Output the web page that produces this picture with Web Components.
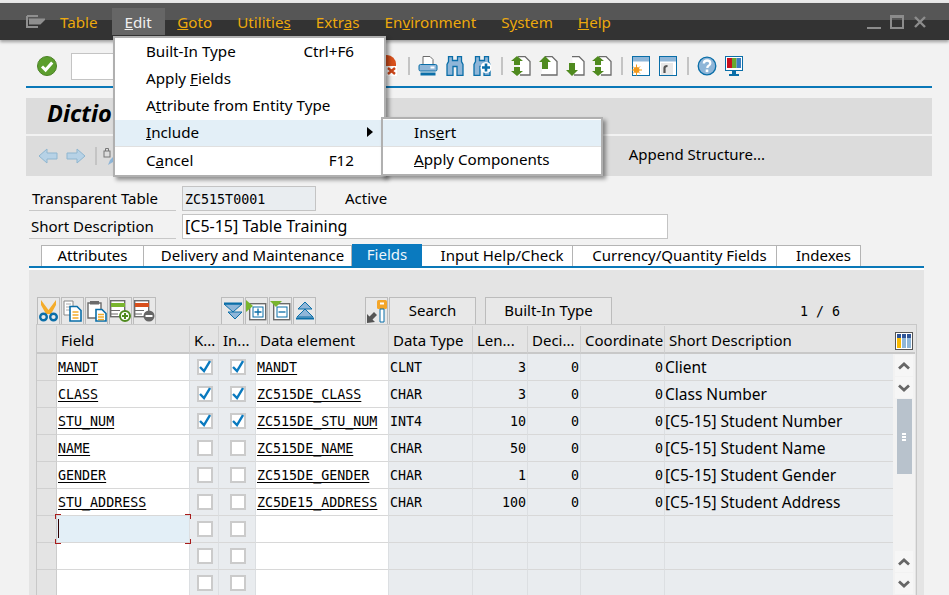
<!DOCTYPE html>
<html lang="en"><head><meta charset="utf-8"><title>Dictionary</title>
<style>
html,body{margin:0;height:595px;overflow:hidden;background:#f2f2f2}
body{font:15px "Noto Sans","Open Sans",sans-serif;color:#000}
</style></head><body>
<sap-app></sap-app>
<script>
const BL='#0a6ea8',LB='#8fb6d8',GR='#4f8a1f',LG='#79b52e',GY='#6b6b6b';
const I={
check:`<svg width="20" height="20" viewBox="0 0 20 20"><circle cx="10" cy="10" r="9.5" fill="#5c9e2e" stroke="#4c8226"/><path d="M5 10.5l3.6 3.6L15.2 6.5" fill="none" stroke="#fff" stroke-width="3"/></svg>`,
redx:`<svg width="20" height="22" viewBox="0 0 20 22"><path d="M0 0h8a9 9 0 0 1 9 9v11H0z" fill="#d8501c"/><path d="M7 11h11v10H7z" fill="#fff"/><path d="M9 13l7 6M16 13l-7 6" stroke="#c9451a" stroke-width="2.4"/></svg>`,
print:`<svg width="20" height="20" viewBox="0 0 19 20"><path d="M4.500 .5h7l3 3v5h-10z" fill="#fff" stroke="${GY}"/><rect x=".5" y="8.500" width="18" height="6.500" rx="1.500" fill="${LB}" stroke="${BL}"/><rect x="12" y="10.500" width="4" height="2" fill="#fff"/><rect x="2" y="16.500" width="15" height="3" fill="${BL}"/></svg>`,
bin:`<svg width="18" height="20" viewBox="0 0 17 20"><path d="M2 .5h4v4h5v-4h4v5l1.500 3v11h-6v-9h-4v9h-6v-11l1.500-3z" fill="${LB}" stroke="${BL}" stroke-width="1.300"/></svg>`,
binp:`<svg width="19" height="20" viewBox="0 0 18 20"><path d="M2 .5h4v4h5v-4h4v5l1.500 3v11h-6v-9h-4v9h-6v-11l1.500-3z" fill="${LB}" stroke="${BL}" stroke-width="1.300"/><circle cx="12.500" cy="11.500" r="5.500" fill="#fff"/><path d="M12.500 7.500v8M8.500 11.500h8" stroke="${BL}" stroke-width="2.600"/></svg>`,
pg:(a,b)=>`<svg width="20" height="20" viewBox="0 0 20 20"><path d="M7 .5h7l5 5v13.500H${b?9:3}" fill="#fff" stroke="${GY}" stroke-width="1.300"/>${a&&!b?'<path d="M7 0L1 6h3v7h6V6h3z" fill="'+GR+'"/>':''}${b&&!a?'<path d="M4 7h6v7h3l-6 6-6-6h3z" fill="'+GR+'"/>':''}${a&&b?'<path d="M6 0L0 5h3v4h6V5h3zM3 11h6v4h3l-6 5-6-5h3z" fill="'+GR+'"/>':''}</svg>`,
win1:`<svg width="20" height="20" viewBox="0 0 18 20"><rect x=".5" y=".5" width="17" height="19" fill="#fff" stroke="${BL}"/><rect x="1" y="1" width="16" height="4.500" fill="${LB}"/><circle cx="4.500" cy="14" r="3" fill="#f39a1d"/><path d="M4.500 8.500v11M0 14h10M1 10.500l7 7M8 10.500l-7 7" stroke="#f39a1d"/></svg>`,
win2:`<svg width="20" height="20" viewBox="0 0 18 20"><rect x=".5" y=".5" width="17" height="19" fill="#fff" stroke="${BL}"/><rect x="1" y="1" width="16" height="4.500" fill="${LB}"/><rect x="2" y="7" width="12" height="12" fill="#e8e8e8"/><path d="M5.500 17v-5q0-2 3-2" fill="none" stroke="#555" stroke-width="2.200"/></svg>`,
help:`<svg width="20" height="20" viewBox="0 0 19 20"><circle cx="9.500" cy="10" r="8.800" fill="${LB}" stroke="${BL}" stroke-width="1.300"/><path d="M6.300 7.500q.2-3 3.300-3 3.200 0 3.200 2.700 0 1.800-2 2.800-1 .6-1 2" fill="none" stroke="#fff" stroke-width="2.300"/><rect x="8.200" y="13.500" width="2.600" height="2.600" fill="#fff"/></svg>`,
mon:`<svg width="20" height="20" viewBox="0 0 18 20"><rect x=".5" y=".5" width="17" height="14" fill="#fff" stroke="${BL}"/><rect x="2" y="2" width="5" height="10" fill="#c8101e"/><rect x="7" y="2" width="4.500" height="10" fill="#6aa82e"/><rect x="11.500" y="2" width="4.500" height="10" fill="#3c7ec0"/><path d="M7 15h4v3H7zM4 18h10v2H4z" fill="${BL}"/></svg>`,
back:`<svg width="20" height="16" viewBox="0 0 20 16"><path d="M1 8l8-7v4h10v6H9v4z" fill="#b7d2e6" stroke="#8fb6d0"/></svg>`,
fwd:`<svg width="20" height="16" viewBox="0 0 20 16"><path d="M19 8l-8-7v4H1v6h10v4z" fill="#b7d2e6" stroke="#8fb6d0"/></svg>`,
lock:`<svg width="10" height="20" viewBox="0 0 10 20"><rect x="1" y="5" width="6" height="6" fill="none" stroke="#777"/><path d="M2.500 5V2.500h3V5" fill="none" stroke="#777"/><path d="M7 14l3-3v5l-5 3z" fill="${LB}"/></svg>`,
cut:`<svg width="19" height="22" viewBox="0 0 19 22"><path d="M2 0l7.500 10L17 0v5l-5 9H7L2 5z" fill="#f4ac2a"/><circle cx="4.500" cy="17" r="3.300" fill="none" stroke="${BL}" stroke-width="2.400"/><circle cx="14.500" cy="17" r="3.300" fill="none" stroke="${BL}" stroke-width="2.400"/></svg>`,
copy:`<svg width="19" height="22" viewBox="0 0 19 22"><path d="M1 1h9v14H1z" fill="#fff" stroke="#888"/><path d="M3 4h5M3 7h4M3 10h4" stroke="#aaa"/><path d="M7 6.500h7l4 4V21H7z" fill="#fff" stroke="${BL}" stroke-width="1.600"/><path d="M9.500 12h6M9.500 15h6M9.500 18h6" stroke="#f4ac2a" stroke-width="1.600"/></svg>`,
paste:`<svg width="20" height="22" viewBox="0 0 20 22"><path d="M1 3h13v15H1z" fill="#fff" stroke="${GY}" stroke-width="1.400"/><rect x="3" y="1" width="9" height="3.500" fill="${GY}"/><path d="M9 9.500h6l4 4V21H9z" fill="#fff" stroke="${BL}" stroke-width="1.600"/><path d="M11 14.500h6M11 17h6M11 19.500h6" stroke="#f4ac2a" stroke-width="1.500"/></svg>`,
rowadd:`<svg width="21" height="22" viewBox="0 0 21 22"><rect x=".7" y=".7" width="14" height="16" fill="#fff" stroke="${GY}" stroke-width="1.400"/><rect x="1" y="3" width="14" height="4" fill="${LG}"/><path d="M1 10.500h9M1 14h7" stroke="${GY}"/><circle cx="15" cy="16" r="5" fill="#fff" stroke="${GR}" stroke-width="2"/><path d="M15 13v6M12 16h6" stroke="${GR}" stroke-width="2"/></svg>`,
rowdel:`<svg width="21" height="22" viewBox="0 0 21 22"><rect x=".7" y=".7" width="14" height="16" fill="#fff" stroke="${GY}" stroke-width="1.400"/><rect x="1" y="3" width="14" height="4" fill="#d8501c"/><path d="M1 10.500h9M1 14h7" stroke="${GY}"/><circle cx="15" cy="16" r="5.500" fill="#666"/><path d="M11.500 16h7" stroke="#fff" stroke-width="2"/></svg>`,
first:`<svg width="20" height="20" viewBox="0 0 20 20"><path d="M1 3h18L10 11z" fill="${LB}" stroke="${BL}"/><path d="M1 2.500h18" stroke="${BL}" stroke-width="2"/><path d="M5 11h14l-7 7z" fill="${LB}" stroke="${BL}"/></svg>`,
exp:`<svg width="21" height="22" viewBox="0 0 21 22"><rect x="3.700" y="3.700" width="16" height="16" fill="#fff" stroke="${GY}" stroke-width="1.400"/><path d="M0 0l7 6-7 6z" fill="${LG}"/><rect x="7" y="7" width="10" height="10" fill="none" stroke="${BL}"/><path d="M12 8.500v7M8.500 12h7" stroke="${BL}" stroke-width="1.300"/></svg>`,
col:`<svg width="21" height="22" viewBox="0 0 21 22"><rect x="3.700" y="3.700" width="16" height="16" fill="#fff" stroke="${GY}" stroke-width="1.400"/><path d="M0 1h12L6 7z" fill="${LG}"/><rect x="7" y="7" width="10" height="10" fill="none" stroke="${BL}"/><path d="M8.500 12h7" stroke="${BL}" stroke-width="1.300"/></svg>`,
last:`<svg width="20" height="20" viewBox="0 0 20 20"><path d="M10 1l7 7H3z" fill="${LB}" stroke="${BL}"/><path d="M10 8l8 8H2z" fill="${LB}" stroke="${BL}"/><path d="M1 17.500h18" stroke="${BL}" stroke-width="2"/></svg>`,
key:`<svg width="20" height="24" viewBox="0 0 20 24"><rect x="10" y="1" width="10" height="9" rx="1.500" fill="#f4a62a"/><rect x="13" y="3.500" width="4" height="2" fill="#fff"/><path d="M13 10h4v13h-4z" fill="#fff" stroke="${BL}"/><path d="M0 24v-9l2.500 2.500L7 13l3 3-4.500 4.500L8 23z" fill="#555"/></svg>`,
cols:`<svg width="18" height="18" viewBox="0 0 18 18"><rect x=".5" y=".5" width="17" height="17" fill="#fff" stroke="#555"/><rect x="2" y="2" width="4" height="14" fill="#f9b900"/><rect x="7" y="2" width="4" height="14" fill="#8fb6d8"/><rect x="12" y="2" width="4" height="14" fill="#8fb6d8"/><rect x="2" y="2" width="4" height="4" fill="#2f5597"/><rect x="7" y="2" width="4" height="4" fill="#2f5597"/><rect x="12" y="2" width="4" height="4" fill="#2f5597"/></svg>`,
menu:`<svg width="19" height="14" viewBox="0 0 19 14"><path d="M1 1h11M1 1v11h11M4 4.500h14l-4 4H4z" fill="none" stroke="#8f8f8f" stroke-width="2"/><path d="M4 5h14l-4 4H4z" fill="#8f8f8f"/></svg>`
};
const MONO='"DejaVu Sans Mono","Liberation Mono",monospace';
function def(name,css,html,init){
  customElements.define(name,class extends HTMLElement{
    connectedCallback(){
      if(this.shadowRoot)return;
      const s=this.attachShadow({mode:'open'});
      s.innerHTML=`<style>${css}</style>`+(typeof html==='function'?html(this):html);
      init&&init(s,this);
    }
  });
}
def('sap-titlebar',`:host{display:flex;height:37px;margin-top:3px;background:linear-gradient(#565656 0,#565656 17px,#333 17px);box-shadow:0 2px 3px rgba(0,0,0,.35);color:#eca90e;position:relative;z-index:2;align-items:flex-start;font-size:15.2px}
.ic{width:60px;padding:10px 0 0 26px;box-sizing:border-box;flex:none;height:37px}
a{display:block;height:27px;margin-top:5px;padding:4px 12.500px 0;line-height:21px;box-sizing:border-box}
a.on{background:#666;color:#f0f0f0;padding:4px 13px 0}
.ctl{margin-left:auto;padding:10px 22px 0 0}
.t{margin-left:-13px;padding:4px 14px 0 13px}`,
`<div class="ic">${I.menu}</div><a class="t">Table</a><a class="on"><u>E</u>dit</a><a><u>G</u>oto</a><a>Utilitie<u>s</u></a><a>Extr<u>a</u>s</a><a>En<u>v</u>ironment</a><a>S<u>y</u>stem</a><a><u>H</u>elp</a>
<div class="ctl"><svg width="60" height="14" viewBox="0 0 60 14"><path d="M0 13h14" stroke="#8c8c8c" stroke-width="2"/><rect x="24" y="1" width="12" height="12" fill="none" stroke="#8c8c8c" stroke-width="2"/><path d="M24 1.500h12" stroke="#8c8c8c" stroke-width="3"/><path d="M48 2l10 10M58 2L48 12" stroke="#8c8c8c" stroke-width="2.400"/></svg></div>`);
def('sap-toolbar',`:host{display:flex;align-items:center;height:40px;margin:0 17px 10px 26px;border-bottom:2px solid #0a78b8;padding-top:6px;position:relative}
.ok{margin:0 14px 0 11px;display:flex}
input{width:200px;height:25px;box-sizing:content-box;border:1px solid #c4c4c4;padding:0;background:#fff;margin-right:106px}
.r{display:flex;align-items:center}
i{width:2px;height:18px;background:#c4c4c4;margin:0 8px 0 9px;flex:none}
.g{display:flex;align-items:center;gap:7px}
.g>*{display:block}`,
`<span class="ok">${I.check}</span><input aria-label="Command"><span class="r">${I.redx}</span><i></i>
<span class="g" style="gap:8px">${I.print}<span style="display:flex;gap:9px">${I.bin}${I.binp}</span></span><i></i>
<span class="g">${I.pg(1,1)}${I.pg(1,0)}${I.pg(0,1)}${I.pg(1,1)}</span><i></i>
<span class="g">${I.win1}${I.win2}</span><i></i><span class="g">${I.help}${I.mon}</span>`);
def('sap-titleband',`:host{display:block;height:36px;margin:0 17px 2px 26px;background:#dcdcdc;font:italic bold 23.500px "Noto Sans",sans-serif;line-height:31px;padding-left:21px;overflow:hidden}`,`<slot></slot>`);
def('sap-appbar',`:host{display:flex;align-items:center;height:40px;margin:0 17px 10px 26px;background:#dcdcdc;padding-left:12px;box-sizing:border-box;overflow:hidden}
i{width:2px;height:18px;background:#c4c4c4;margin:0 6px 0 9px}.s{margin-left:8px;display:flex}
.a{margin-left:auto;padding:0 167px 4px 0}`,`${I.back}<span class="s">${I.fwd}</span><i></i>${I.lock}<span class="a"><slot></slot></span>`);
def('sap-formrow',`:host{display:flex;height:25px;margin:0 0 3px 29px;align-items:stretch}
.l{width:147px;box-sizing:border-box;border-bottom:1px solid #c8c8c8;padding-left:var(--pl,3px);line-height:24px;flex:none;margin-right:6px}`,`<div class="l"><slot name="label"></slot></div><slot></slot>`);
def('sap-field',`:host{display:block;box-sizing:border-box;border:1px solid #c4c4c4;height:25px;padding-left:2px;background:var(--bg,#fff);width:var(--w,134px);font:var(--font,16px "Noto Sans",sans-serif);line-height:var(--lh,22px)}`,`<slot></slot>`);
def('sap-tabs',`:host{display:flex;margin:6px 0 0 29px;width:895px;border-bottom:2px solid #0a78b8;padding-left:12px;box-sizing:border-box;height:23px;align-items:flex-end}
.t{box-sizing:border-box;height:21px;border:solid #b4b4b4;border-width:1px 1px 0 0;text-align:center;line-height:19px;background:#fff;flex:none;padding-left:10px;white-space:nowrap}
.t:first-of-type{border-left:1px solid #b4b4b4;padding-left:0}
.on{background:#0a7abf;color:#eef6fb;border:0;height:22px;line-height:21px;padding-left:0}`,
t=>[['Attributes',103],['Delivery and Maintenance',208],['Fields',70,1],['Input Help/Check',151],['Currency/Quantity Fields',204],['Indexes',84]].map(a=>`<div class="t${a[2]?' on':''}" style="width:${a[1]}px">${a[0]}</div>`).join(''));
def('sap-panel',`:host{display:block;margin:0 25px 0 29px;background:#e4e4e4;height:330px;border-top:2px solid #fff;padding:27px 0 0 7px;box-sizing:border-box;overflow:hidden}`,`<slot></slot>`);
def('sap-tbtn',`:host{display:flex;align-items:center;justify-content:center;box-sizing:border-box;height:27px;width:var(--w,23px);margin-right:1px;border:solid #bcbcbc;border-width:1px 1px 0 1px;background:#e8e8e8;flex:none;overflow:hidden;padding-bottom:var(--pb,0)}`,`<slot></slot>`);
def('sap-tabletools',`:host{display:flex;height:27px;padding-left:1px}
.sp{flex:none}.pg{font:13.33px ${MONO};margin-left:187px;line-height:29px;white-space:pre}`,
()=>`<sap-tbtn>${I.cut}</sap-tbtn><sap-tbtn>${I.copy}</sap-tbtn><sap-tbtn>${I.paste}</sap-tbtn><sap-tbtn>${I.rowadd}</sap-tbtn><sap-tbtn>${I.rowdel}</sap-tbtn>
<span class="sp" style="width:64px"></span><sap-tbtn>${I.first}</sap-tbtn><sap-tbtn>${I.exp}</sap-tbtn><sap-tbtn>${I.col}</sap-tbtn><sap-tbtn>${I.last}</sap-tbtn>
<span class="sp" style="width:48px"></span><sap-tbtn>${I.key}</sap-tbtn><sap-tbtn style="--w:87px;--pb:2px">Search</sap-tbtn><span class="sp" style="width:8px"></span><sap-tbtn style="--w:127px;--pb:2px">Built-In Type</sap-tbtn><span class="pg">1 / 6</span>`);
def('sap-check',`:host{display:block;width:16px;height:16px;box-sizing:border-box;border:2px solid #cbcbcb;background:#fff;position:relative}
svg{display:block;margin:-1px 0 0 0}`,h=>h.hasAttribute('on')?`<svg width="12" height="13" viewBox="0 0 12 13"><path d="M1 7l4 4 6-10" fill="none" stroke="#0a7abf" stroke-width="2.400"/></svg>`:'');
def('sap-scroll',`:host{display:flex;flex-direction:column;grid-column:11;grid-row:2 / span 9;background:#f2f2f2;padding:1px 2px 0 2px;height:241px;box-sizing:border-box}
.b{height:21px;background:#f6f6f6;margin-bottom:1px;display:flex;align-items:center;justify-content:center;flex:none}
.th{width:15px;height:75px;background:#b8c2cc;margin:0 auto;display:flex;align-items:center;justify-content:center;flex:none}
.sp{flex:1}`,()=>{const u=`<svg width="12" height="8" viewBox="0 0 12 8"><path d="M1 6.500l5-4.500 5 4.500" fill="none" stroke="#666" stroke-width="2.800"/></svg>`,d=`<svg width="12" height="8" viewBox="0 0 12 8"><path d="M1 1.500l5 4.500 5-4.500" fill="none" stroke="#666" stroke-width="2.800"/></svg>`;
return `<div class="b">${u}</div><div class="b">${d}</div><div class="th"><svg width="4" height="8" viewBox="0 0 4 8"><path d="M0 1h4M0 4h4M0 7h4" stroke="#fff" stroke-width="1.800"/></svg></div><div class="sp"></div><div class="b">${u}</div><div class="b">${d}</div>`});
const rows=[['MANDT',1,1,'MANDT','CLNT',3,0,0,'Client'],['CLASS',1,1,'ZC515DE_CLASS','CHAR',3,0,0,'Class Number'],['STU_NUM',1,1,'ZC515DE_STU_NUM','INT4',10,0,0,'[C5-15] Student Number'],['NAME',0,0,'ZC515DE_NAME','CHAR',50,0,0,'[C5-15] Student Name'],['GENDER',0,0,'ZC515DE_GENDER','CHAR',1,0,0,'[C5-15] Student Gender'],['STU_ADDRESS',0,0,'ZC5DE15_ADDRESS','CHAR',100,0,0,'[C5-15] Student Address'],['',0,0,'','','','','',''],['',0,0,'','','','','',''],['',0,0,'','','','','','']];
def('sap-table',`:host{display:grid;grid-template-columns:20px 133px 29px 37px 133px 84px 55px 53px 84px 228px 22px;grid-auto-rows:27px;border:solid #c8c8c8;border-width:1px 1px 0 1px;padding:1px 2px 0 0;width:881px;box-sizing:border-box;background:#e4e4e4;grid-template-rows:28px}
.h{background:#e4e4e4;border-right:1px solid #d0d0d0;border-bottom:2px solid #c8c8c8;padding-left:4px;line-height:29px;box-sizing:border-box;white-space:nowrap;overflow:hidden}
.h0{padding:0}
.hd{background:#e4e4e4;border-bottom:1px solid #d0d0d0;box-sizing:border-box;border-right:1px solid #ccc}
.c{background:#e9ecef;border-right:1px solid #dcdfe2;border-bottom:1px solid #d8d8d8;box-sizing:border-box;font:13.33px/28px ${MONO};padding:0 1px;white-space:nowrap;overflow:hidden}
.w{background:#fff}.n{text-align:right}.p{font:15.500px/26px "Noto Sans",sans-serif;padding-left:0;border-right:0}
.k{display:flex;align-items:center;justify-content:center;padding:0 0 0 1px}
.cur{background:#e3eff7;position:relative;overflow:visible;z-index:1}
.cur b{position:absolute;left:1px;top:3px;width:1px;height:19px;background:#300}
.cur s{position:absolute;width:5px;height:4px;border:solid #a81c1c;border-width:0}
.tl{left:-2px;top:-2px;border-width:1px 0 0 1px!important}.tr{right:-2px;top:-2px;border-width:1px 1px 0 0!important}
.bl{left:-2px;bottom:-2px;border-width:0 0 1px 1px!important}.br{right:-2px;bottom:-2px;border-width:0 1px 1px 0!important}
u{text-decoration-thickness:1px;text-underline-offset:2px}`,
()=>{let o=`<div class="h h0"></div>`+['Field','K...','In...','Data element','Data Type','Len...','Deci...','Coordinate'].map(t=>`<div class="h">${t}</div>`).join('')+`<div class="h" style="grid-column:span 2;position:relative;border-right:0">Short Description<span style="position:absolute;right:2px;top:4px">${I.cols}</span></div>`;
rows.forEach((r,i)=>{
 const cur=i===6;
 o+=`<div class="hd"></div><div class="c w${cur?' cur':''}">${cur?'<b></b><s class="tl"></s><s class="tr"></s><s class="bl"></s><s class="br"></s>':''}${r[0]?`<u>${r[0]}</u>`:''}</div>`
 +`<div class="c k"><sap-check ${r[1]?'on':''}></sap-check></div><div class="c k"><sap-check ${r[2]?'on':''}></sap-check></div>`
 +`<div class="c w">${r[3]?`<u>${r[3]}</u>`:''}</div><div class="c">${r[4]}</div><div class="c n">${r[5]}</div><div class="c n">${r[6]}</div><div class="c n">${r[7]}</div><div class="c p">${r[8]}</div>`;
 if(i===0)o+=`<sap-scroll></sap-scroll>`;
});return o});
def('sap-menu',`:host{position:absolute;display:block;background:#fff;border:2px solid #b0b0b0;padding:1px 0 0;box-shadow:3px 3px 4px rgba(0,0,0,.4);box-sizing:border-box;z-index:5;font-size:15.2px}`,`<slot></slot>`);
def('sap-item',`:host{display:flex;height:27px;line-height:24px;padding-left:31px;padding-right:30px;justify-content:space-between;box-sizing:border-box;position:relative}
:host([on]){background:#e3eff7;border-bottom:1px solid #e0e0e0}
.ar{position:absolute;right:11px;top:7px;width:0;height:0;border-left:6px solid #000;border-top:5px solid transparent;border-bottom:5px solid transparent}`,
h=>`<span><slot></slot></span><span>${h.getAttribute('key')||''}</span>${h.hasAttribute('arrow')?'<span class="ar"></span>':''}`);
def('sap-app',`:host{display:block;position:relative;height:595px;width:949px;overflow:hidden;background:#f2f2f2}
.top{height:3px;background:#e9e9e9;position:absolute;left:0;right:0;top:0}
.sel{--bg:#e9edf0;--font:13.33px ${MONO};--w:134px;--lh:25px}
.act{margin-left:29px;line-height:24px}`,
`<div class="top"></div><sap-titlebar></sap-titlebar><sap-toolbar></sap-toolbar>
<sap-titleband>Dictio</sap-titleband><sap-appbar>Append Structure...</sap-appbar>
<sap-formrow><span slot="label">Transparent Table</span><sap-field class="sel">ZC515T0001</sap-field><span class="act">Active</span></sap-formrow>
<sap-formrow style="--pl:2px"><span slot="label">Short Description</span><sap-field style="--w:486px">[C5-15] Table Training</sap-field></sap-formrow>
<sap-tabs></sap-tabs>
<sap-panel><sap-tabletools></sap-tabletools><sap-table></sap-table></sap-panel>
<sap-menu style="left:113px;top:36px;width:273px;height:141px"><sap-item key="Ctrl+F6">Built-In Type</sap-item><sap-item>Apply <u>F</u>ields</sap-item><sap-item>A<u>t</u>tribute from Entity Type</sap-item><sap-item on arrow><u>I</u>nclude</sap-item><sap-item key="F12" style="margin-top:1px">C<u>a</u>ncel</sap-item></sap-menu>
<sap-menu style="left:381px;top:117px;width:222px;height:59px"><sap-item on>Ins<u>e</u>rt</sap-item><sap-item><u>A</u>pply Components</sap-item></sap-menu>`);
</script>
</body></html>
